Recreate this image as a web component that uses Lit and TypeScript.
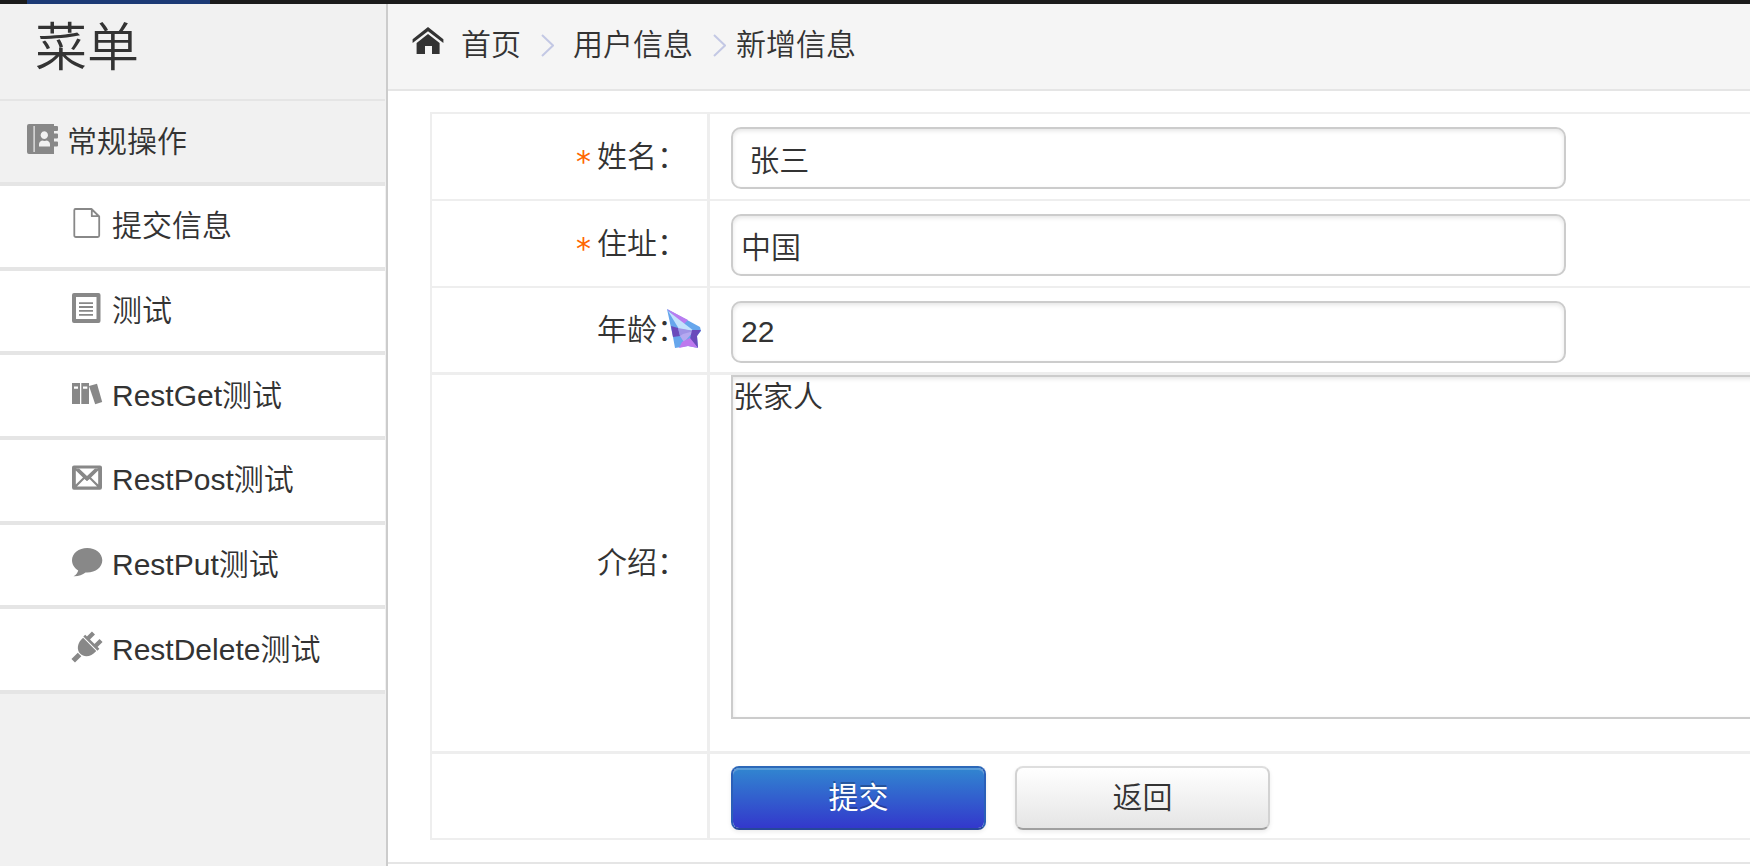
import { LitElement, html, svg, css, TemplateResult } from "lit";
import { customElement } from "lit/decorators.js";

const icons: Record<string, TemplateResult> = {
  book: svg`
    <path fill-rule="evenodd" d="M2 0H27V2H30Q31 2 31 3V6Q31 7 30 7H27V9.500H30Q31 9.500 31 10.500V13.500Q31 14.500 30 14.500H27V17.500H30Q31 17.500 31 18.500V21.500Q31 22.500 30 22.500H27V30H2Q0 30 0 28V2Q0 0 2 0ZM6.500 2V28H7.700V2ZM17.300 7.200A3.700 3.900 0 1 0 17.310 7.200ZM12 22.500H23V20.500Q23 17.500 20 16.500L17.500 17L15 16.500Q12 17.500 12 20.500Z"/>`,
  file: svg`
    <path fill="none" stroke="currentColor" stroke-width="1.800" stroke-linejoin="round" d="M3.500 1H19.500L27.200 8.500V27.500Q27.200 29 25.700 29H4Q2.300 29 2.300 27.500V2.200Q2.300 1 3.500 1ZM19.800 1V8.200H27"/>`,
  list: svg`
    <path fill-rule="evenodd" d="M2 0H26.500Q28.500 0 28.500 2V28Q28.500 30 26.500 30H2Q0 30 0 28V2Q0 0 2 0ZM4 4V26H24.500V4Z"/>
    <path d="M7 9.200h14v1.800h-14zM7 13.100h14v1.800h-14zM7 17h14v1.800h-14zM7 20.900h14v1.800h-14z"/>`,
  books: svg`
    <path fill-rule="evenodd" d="M0 5H8V26H0ZM2 8.500V10.700H6V8.500ZM9.300 5H17V26H9.300ZM11 8.500V10.700H15.300V8.500Z"/>
    <path d="M17 8L25 5.700L30.200 24L23.200 26.200Z"/>`,
  mail: svg`
    <path fill-rule="evenodd" d="M2 3.500H28Q30 3.500 30 5.500V25.500Q30 27.800 28 27.800H2Q0 27.800 0 25.500V5.500Q0 3.500 2 3.500ZM4.200 6.500L15 15.700L25.800 6.500ZM3.800 8.500V22.500L11 15.500ZM26.200 8.500V22.500L19 15.500ZM5 24.500H25L17.600 17L15 19.100L12.400 17Z"/>
    <path d="M4 6.500H7L15 14L23 6.500H26L15 19.100Z"/>`,
  comment: svg`
    <path d="M15.200 1C23.600 1 30.300 6.400 30.300 13.300C30.300 20.200 23.600 25.500 15.200 25.500H13.500C10.500 27.800 6 29.500 1.500 29.200C4 28 5.800 25.500 6.200 23.400C2.400 21.200 0 17.500 0 13.300C0 6.400 6.800 1 15.200 1Z"/>`,
  plug: svg`
    <g transform="translate(15 15) rotate(45)">
      <path d="M-10 -7.500H10V-4.800H-10ZM-7.500 -14.500H-3.200V-7H-7.500ZM3.200 -14.500H7.500V-7H3.200ZM-9.300 -3.800H9.300C10 4 5.500 9.500 0 9.500C-5.500 9.500 -10 4 -9.300 -3.800ZM-2.500 10.500H2.500V19.500H-2.500Z"/>
    </g>`,
  home: svg`
    <path d="M15 0L30.400 12.200V16L15 4.200L-.4 16V12.200ZM15 7L26.600 16V27H19V19H12V27H3.600V16Z"/>`,
};

const icon = (name: string) =>
  html`<svg class="icon" viewBox="0 0 30 30" width="30" height="30" aria-hidden="true">${icons[name]}</svg>`;

const menu = [
  ["file", "提交信息"],
  ["list", "测试"],
  ["books", "RestGet测试"],
  ["mail", "RestPost测试"],
  ["comment", "RestPut测试"],
  ["plug", "RestDelete测试"],
];

@customElement("app-root")
export class AppRoot extends LitElement {
  static styles = css`
    :host {
      display: flex;
      flex-direction: column;
      height: 100vh;
      overflow: hidden;
      box-sizing: border-box;
      background: #fff;
      color: #333;
      font: 350 30px/40px "Liberation Sans", "Noto Sans CJK SC", sans-serif;
    }
    * { box-sizing: border-box; }
    a { color: inherit; text-decoration: none; }
    .topbar { flex: none; height: 4px; padding-left: 27px; background: #1b1b1b; }
    .topbar-active { width: 183px; height: 4px; background: #1c3a75; }
    .body { display: flex; flex: 1; min-height: 0; }

    .side {
      flex: none;
      width: 388px;
      padding-right: 1px;
      border-right: 2px solid #ccc;
      background: #f1f1f1;
    }
    .side-title {
      height: 97px;
      margin: 0;
      padding: 9px 0 0 35px;
      border-bottom: 2px solid #e5e5e5;
      font-size: 52px;
      font-weight: inherit;
      line-height: 70px;
    }
    .menu {
      display: grid;
      grid-auto-rows: 1fr;
      min-height: 508px;
      margin: 0;
      padding: 0;
      list-style: none;
    }
    .item {
      display: flex;
      align-items: center;
      gap: 10px;
      height: 100%;
      padding-left: 72px;
      border-bottom: 4px solid #e5e5e5;
      background: #fff;
    }
    .group { height: 85px; padding-left: 27px; background: transparent; }
    .icon { flex: none; margin-bottom: 6px; overflow: visible; fill: currentColor; }
    .side .icon { color: #888; }

    .main { flex: 1; min-width: 0; overflow: hidden; }
    .crumbs {
      display: flex;
      align-items: center;
      height: 87px;
      padding: 0 0 3px 25px;
      border-bottom: 2px solid #e5e5e5;
      background: #f5f5f5;
    }
    .crumbs a { display: flex; align-items: center; gap: 18px; }
    .chevron { flex: none; margin: 0 19px 0 20px; fill: none; stroke: #c3c8e4; stroke-width: 2; }
    .chevron-tight { margin-right: 10px; }

    .form { padding: 21px 0 22px 42px; border-bottom: 2px solid #e5e5e5; }
    .table { width: calc(100% + 42px); border-spacing: 0; border: 2px solid #eee; table-layout: fixed; }
    .label-col { width: 278px; }
    th, td { padding: 0; border-bottom: 2px solid #eee; font-weight: inherit; }
    tr:last-child > * { border-bottom: 0; }
    .thick > * { border-bottom-width: 3px; }
    th { position: relative; padding-right: 20px; border-right: 3px solid #eee; text-align: right; }
    td { padding-left: 21px; }
    .field { height: 87px; }
    .field + td { padding-top: 3px; }
    .star { margin-right: 6px; color: #f60; font: 30px/30px "DejaVu Sans", sans-serif; vertical-align: -5px; }
    input, textarea, button { font: inherit; color: inherit; }
    .text {
      display: block;
      width: 835px;
      max-width: 100%;
      height: 62px;
      padding: 0 8px;
      border: 2px solid #ccc;
      border-radius: 10px;
      background: #fff;
      box-shadow: inset 0 2px 4px rgba(0, 0, 0, 0.1);
      outline: 0;
    }
    .area {
      display: block;
      width: 100%;
      height: 344px;
      margin-bottom: 32px;
      padding: 0;
      border: 2px solid #ccc;
      border-radius: 0;
      background: #fff;
      box-shadow: inset 0 2px 4px rgba(0, 0, 0, 0.1);
      outline: 0;
      resize: none;
    }
    .pointer { position: absolute; right: 6px; top: 21px; }
    .actions { display: flex; gap: 29px; padding: 12px 0 8px; }
    .btn {
      width: 255px;
      height: 64px;
      padding: 0;
      border: 2px solid #d5d5d5;
      border-color: #dedede #d2d2d2 #a0a0a0;
      border-radius: 8px;
      background: linear-gradient(#fff, #e5e5e5) padding-box;
      box-shadow: 0 2px 4px rgba(0, 0, 0, 0.08);
    }
    .primary {
      border-color: #2c68b8 #2a5fb8 #26479a;
      background: linear-gradient(#3186d0, #3338cc) padding-box;
      box-shadow: inset 0 2px 0 rgba(255, 255, 255, 0.2), 0 2px 4px rgba(0, 0, 0, 0.08);
      color: #fff;
      text-shadow: 0 -2px 0 rgba(0, 0, 0, 0.25);
      font-weight: 400;
    }
  `;

  private chevron(extra = "") {
    return html`<svg class="chevron ${extra}" viewBox="0 0 13 24" width="13" height="24" aria-hidden="true">
      <path d="M1 2L12 12.500L1 23" />
    </svg>`;
  }

  render() {
    return html`
      <div class="topbar"><div class="topbar-active"></div></div>
      <div class="body">
        <nav class="side">
          <h1 class="side-title">菜单</h1>
          <a class="item group" href="#">${icon("book")}<span>常规操作</span></a>
          <ul class="menu">
            ${menu.map(([name, text]) => html`<li><a class="item" href="#">${icon(name)}<span>${text}</span></a></li>`)}
          </ul>
        </nav>
        <main class="main">
          <nav class="crumbs">
            <a href="#">${icon("home")}<span>首页</span></a>
            ${this.chevron()}
            <a href="#">用户信息</a>
            ${this.chevron("chevron-tight")}
            <span>新增信息</span>
          </nav>
          <form class="form" @submit=${(e: Event) => e.preventDefault()}>
            <table class="table">
              <colgroup><col class="label-col" /><col /></colgroup>
              <tr>
                <th class="field"><span class="star">*</span><label for="name">姓名：</label></th>
                <td><input class="text" id="name" .value=${" 张三"} /></td>
              </tr>
              <tr>
                <th class="field"><span class="star">*</span><label for="address">住址：</label></th>
                <td><input class="text" id="address" .value=${"中国"} /></td>
              </tr>
              <tr class="thick">
                <th class="field">
                  <label for="age">年龄：</label>
                  <svg class="pointer" viewBox="0 0 34 40" width="34" height="40" aria-hidden="true">
                    <path fill="#66a6ec" d="M0 0L33 18L34 22L30 27L31 39L21 37L8 39L6 28Z" />
                    <path fill="#b97cf0" d="M0 0L21 11L16 16Z" />
                    <path fill="#c3e2fd" d="M1 2L27 22L12 20Z" />
                    <path fill="#6a4abb" d="M4 17L11 19L13 27L6 28Z" />
                    <path fill="#9f93e6" d="M11 19L27 22L17 33L13 27Z" />
                    <path fill="#b5a9f0" d="M16 25L27 22L17 33L13 27Z" />
                    <path fill="#6a4abb" d="M25 21L34 21L30 27L31 39L23 30Z" />
                    <path fill="#bd78ee" d="M15 33L23 29L31 39L21 37L12 39Z" />
                  </svg>
                </th>
                <td><input class="text" id="age" .value=${"22"} /></td>
              </tr>
              <tr class="thick">
                <th><label for="intro">介绍：</label></th>
                <td><textarea class="area" id="intro" .value=${"张家人"}></textarea></td>
              </tr>
              <tr>
                <th></th>
                <td>
                  <div class="actions">
                    <button class="btn primary" type="submit">提交</button>
                    <button class="btn" type="button">返回</button>
                  </div>
                </td>
              </tr>
            </table>
          </form>
        </main>
      </div>
    `;
  }
}
